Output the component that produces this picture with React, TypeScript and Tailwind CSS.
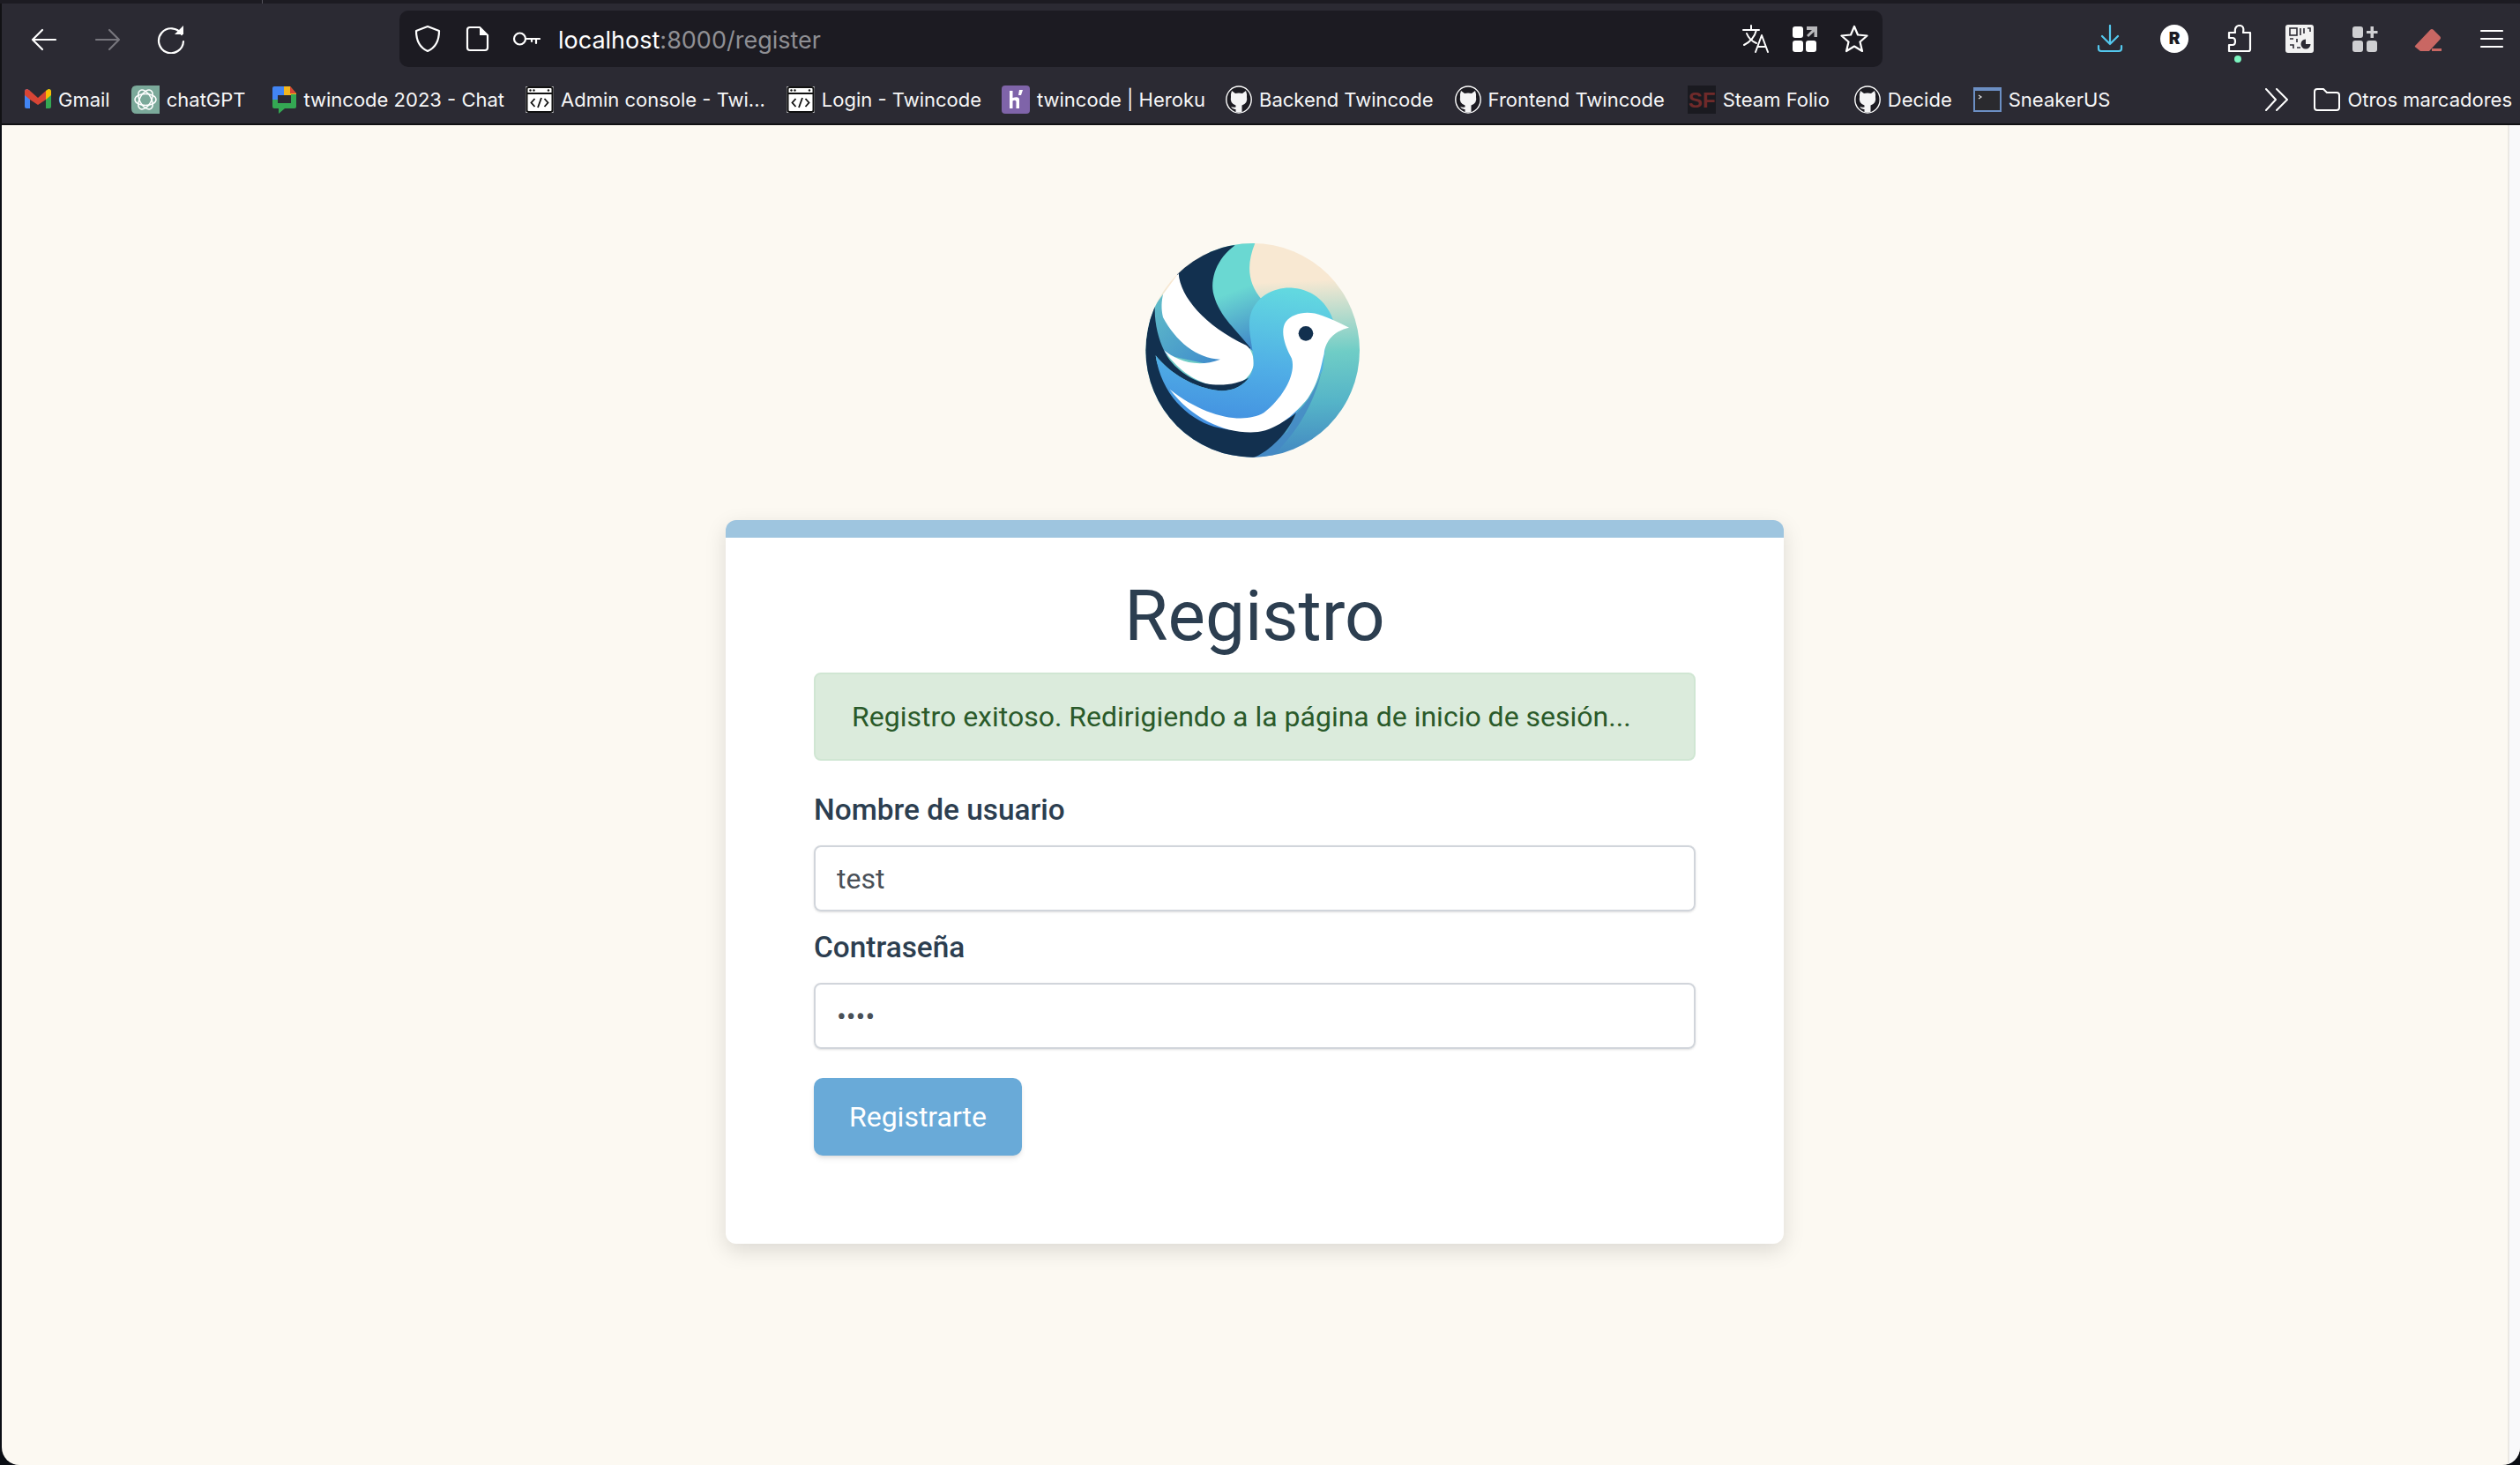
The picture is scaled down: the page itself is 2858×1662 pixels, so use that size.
import React from "react";

const Github = () => (
  <svg viewBox="0 0 30 32" className="w-[30px] h-[32px] shrink-0">
    <ellipse cx="15" cy="16" rx="14.2" ry="15" fill="#1c1b22" stroke="#ffffff" strokeWidth="1.4" />
    <path d="M7 6 L11 9 Q15 8 19 9 L23 6 Q24.5 10 24 13 Q25.5 20 18.5 22.5 L18.5 30 L11.5 30 L11.5 27 Q8 27.5 6 24 Q8.5 25 11.5 24.5 L11.5 22.5 Q4.5 20 6 13 Q5.5 10 7 6 Z" fill="#f4f4f5" />
  </svg>
);

const CodeWin = () => (
  <svg viewBox="0 0 32 32" className="w-8 h-8 shrink-0">
    <rect x="0.5" y="1" width="31" height="30" fill="#ffffff" />
    <rect x="1.5" y="2" width="29" height="28" rx="2" fill="#ffffff" stroke="#111" strokeWidth="2" />
    <path d="M1.5 9 H30.5" stroke="#111" strokeWidth="2" />
    <circle cx="5.5" cy="5.5" r="1.2" fill="#111" />
    <circle cx="9.5" cy="5.5" r="1.2" fill="#111" />
    <circle cx="26" cy="5.5" r="1.2" fill="#111" />
    <path d="M10.5 15 L6.5 19.5 L10.5 24 M21.5 15 L25.5 19.5 L21.5 24 M18 14 L14 25" fill="none" stroke="#111" strokeWidth="1.8" />
  </svg>
);

const Gmail = () => (
  <svg viewBox="0 0 30 24" className="w-[30px] h-[24px] shrink-0">
    <path d="M0 3 Q0 0 3 0 L6 2 V22 H2 Q0 22 0 20 Z" fill="#4285f4" />
    <path d="M30 3 Q30 0 27 0 L24 2 V22 H28 Q30 22 30 20 Z" fill="#34a853" />
    <path d="M24 2 L27 0 Q30 0 30 3 V7 L24 12 Z" fill="#fbbc04" />
    <path d="M0 3 Q0 0 3 0 L6 2 L15 10 L24 2 V12 L15 18 L6 12 L0 7 Z" fill="#d74535" />
  </svg>
);

const ChatGPT = () => (
  <svg viewBox="0 0 32 32" className="w-8 h-8 shrink-0">
    <path d="M6 0 H32 V32 H6 Q0 32 0 26 V6 Q0 0 6 0 Z" fill="#7ba99a" />
    <g fill="none" stroke="#ffffff" strokeWidth="1.5">
      <ellipse cx="16" cy="16" rx="12" ry="6.5" />
      <ellipse cx="16" cy="16" rx="12" ry="6.5" transform="rotate(60 16 16)" />
      <ellipse cx="16" cy="16" rx="12" ry="6.5" transform="rotate(120 16 16)" />
    </g>
  </svg>
);

const GChat = () => (
  <svg viewBox="0 0 28 32" className="w-[28px] h-8 shrink-0 ml-[6px]">
    <path d="M2 1 H13 V11 H6 V17 H0 V3 Q0 1 2 1Z" fill="#4285f4" />
    <path d="M13 1 H20 L27 9 V11 H13Z" fill="#f3b51d" />
    <path d="M20 1 L27 9 H20Z" fill="#d74535" />
    <path d="M21 10 H27 V24 Q27 26 25 26 H14 L7 32 V26 H2 Q0 26 0 24 V16 H6 V20 H21 Z" fill="#34a853" />
    <rect x="6" y="11" width="15" height="9" fill="#2b2a33" />
  </svg>
);

const Heroku = () => (
  <svg viewBox="0 0 32 32" className="w-8 h-8 shrink-0">
    <rect width="32" height="32" rx="4" fill="#7f64a9" />
    <path d="M9 6 H12.5 V14 Q20 12 20 16 V26 H16.5 V18 Q15 16 12.5 17.5 V26 H9 Z" fill="#ffffff" />
    <path d="M20 5 L24 5 L22 11 L19 11 Z" fill="#ffffff" />
  </svg>
);

const Steam = () => (
  <svg viewBox="0 0 32 32" className="w-8 h-8 shrink-0">
    <rect width="32" height="32" fill="#1a1a20" />
    <text x="16" y="25" textAnchor="middle" fontFamily="Liberation Sans, sans-serif" fontWeight="700" fontSize="24" fill="#6f2a2a">SF</text>
  </svg>
);

const Terminal = () => (
  <svg viewBox="0 0 32 28" className="w-8 h-7 shrink-0">
    <rect width="32" height="28" fill="#6c8fc4" />
    <rect x="2" y="4" width="28" height="22" fill="#2a2a2e" />
    <path d="M6 9 L9 11 L6 13" fill="none" stroke="#ddd" strokeWidth="1.2" />
  </svg>
);

const Mark = ({ icon, label, className = "" }: { icon: React.ReactNode; label: string; className?: string }) => (
  <div className={`flex items-center shrink-0 gap-[8px] ${className}`}>
    {icon}
    <span>{label}</span>
  </div>
);

const Bird = () => (
  <svg viewBox="0 0 900 810" className="w-[300px] h-[270px] shrink-0 -ml-[6px]">
    <defs>
      <clipPath id="disc"><circle cx="452" cy="412" r="364" /></clipPath>
      <linearGradient id="base" x1="0.6" y1="0.05" x2="0.65" y2="1">
        <stop offset="0.18" stopColor="#f8e8d2" />
        <stop offset="0.5" stopColor="#6fcdc6" />
        <stop offset="0.72" stopColor="#55b4c8" />
        <stop offset="1" stopColor="#3f7fc0" />
      </linearGradient>
      <linearGradient id="teal" x1="0.5" y1="0" x2="0.7" y2="1">
        <stop offset="0.45" stopColor="#6ad8d2" />
        <stop offset="1" stopColor="#3f84c8" />
      </linearGradient>
      <linearGradient id="wingb" x1="0" y1="0" x2="1" y2="1">
        <stop offset="0" stopColor="#63c1c8" />
        <stop offset="1" stopColor="#3d88cc" />
      </linearGradient>
      <linearGradient id="body" x1="0.6" y1="0" x2="0.45" y2="1">
        <stop offset="0" stopColor="#62d8e0" />
        <stop offset="0.55" stopColor="#50aee6" />
        <stop offset="1" stopColor="#428ee0" />
      </linearGradient>
    </defs>
    <g clipPath="url(#disc)">
      <rect width="900" height="810" fill="url(#base)" />
      <path d="M690 470 C670 540 640 590 598 628 L570 690 L405 790 L500 790 C600 700 660 600 690 470Z" fill="#4588c4" opacity="0.8" />
      <path d="M360 30 L468 30 C430 110 430 180 485 242 L460 420 L300 300 L280 100Z" fill="url(#teal)" />
      <path d="M392 55 C330 100 305 170 320 225 C340 300 400 345 445 405 L400 420 C300 360 230 280 200 190 L190 120 L300 60Z" fill="#12304f" />
      <path d="M147 222 L90 300 L120 420 L350 470 L345 440 C290 440 200 370 147 222Z" fill="url(#wingb)" />
      <path d="M200 150 C205 230 290 330 430 395 C450 410 458 440 455 465 C440 520 390 540 320 532 C250 520 190 470 150 412 C190 445 260 475 342 443 C260 440 190 380 147 300 C140 270 142 245 147 222Z" fill="#ffffff" />
      <path d="M120 250 C100 300 70 420 100 540 C180 720 330 790 420 790 C500 770 570 700 600 625 L470 620 C350 640 260 620 180 545 C140 500 125 460 122 430 C170 490 250 540 340 550 C390 552 420 530 440 505 C400 530 340 535 290 525 C230 510 170 460 150 412 C130 370 115 310 120 250Z" fill="#12304f" />
      <path d="M122 430 C170 490 250 540 340 550 C400 552 445 520 455 465 C460 420 430 340 445 290 C465 225 530 195 590 200 C660 205 710 255 728 315 L700 400 L690 480 L600 625 C540 680 420 700 320 672 C230 645 140 560 122 430Z" fill="url(#body)" />
      <path d="M780 335 C750 320 720 305 690 295 C640 275 590 285 565 315 C545 345 560 395 585 440 C600 490 560 570 490 625 C420 665 290 640 170 545 C250 650 370 700 470 690 C540 680 600 625 640 575 C680 515 685 460 695 425 C700 370 740 345 780 335Z" fill="#ffffff" />
      <circle cx="633" cy="355" r="25" fill="#12304f" />
    </g>
  </svg>
);

const I = ({ children, className = "" }: { children: React.ReactNode; className?: string }) => (
  <svg viewBox="0 0 32 32" className={`w-8 h-8 shrink-0 ${className}`} fill="none" stroke="currentColor" strokeWidth="2.2" strokeLinecap="round" strokeLinejoin="round">
    {children}
  </svg>
);

export default function App() {
  return (
    <div className="w-[2858px] h-[1662px] flex flex-col overflow-hidden font-['Inter','Liberation_Sans',sans-serif] bg-[#0b0e14]">
      <div className="h-1 bg-[#1c1b22] shrink-0 flex">
        <div className="w-[298px] border-r border-[#55545c]" />
      </div>
      <header className="shrink-0 bg-[#2b2a33] border-l-[2px] border-[#111114] text-white h-[136px] flex flex-col">
        <div className="h-[72px] pt-[8px] flex items-start">
          <div className="flex items-center h-[64px] w-full">
            <I className="ml-[32px] mt-[2px] text-white">
              <path d="M29 16 H3 M14 5 L3 16 L14 27" />
            </I>
            <I className="ml-[40px] mt-[2px] text-[#77767d]">
              <path d="M3 16 H29 M18 5 L29 16 L18 27" />
            </I>
            <I className="ml-[40px] mt-[2px] text-white">
              <path d="M28 10 A14 14 0 1 0 30 18" />
              <path d="M20 10 L30 10 L30 0 Z" fill="currentColor" stroke="none" />
            </I>
            <div className="ml-[243px] w-[1682px] h-[64px] rounded-[10px] bg-[#1c1b22] flex items-center pl-[16px] pr-[16px] shrink-0">
              <I>
                <path d="M16 2 L29 7 C29 18 25 26 16 30 C7 26 3 18 3 7 Z" />
              </I>
              <I className="ml-[24px]">
                <path d="M8 3 H19 L28 12 V26 Q28 29 25 29 H8 Q5 29 5 26 V6 Q5 3 8 3Z" />
                <path d="M19 3 L28 12 H19Z" fill="currentColor" stroke="none" />
              </I>
              <I className="ml-[24px]">
                <circle cx="8.5" cy="16" r="6.5" />
                <path d="M15 16 H31 M27 16 V21 M22 16 V19" />
              </I>
              <span className="ml-[20px] mt-[2px] text-[27px] leading-none">
                localhost<span className="text-[#8f8f94]">:8000/register</span>
              </span>
              <I className="ml-auto">
                <path d="M2 6 H20 M11 1 V6 M17 6 C15 14 9 20 3 23 M6 10 C8 15 12 19 17 21" strokeWidth="2" />
                <path d="M16 31 L23 12 L30 31 M18.5 25 H27.5" strokeWidth="2" />
              </I>
              <svg viewBox="0 0 32 32" className="w-8 h-8 shrink-0 ml-[24px]" fill="#ffffff">
                <rect x="2" y="2" width="12" height="13" rx="3" />
                <rect x="2" y="18" width="12" height="13" rx="3" />
                <rect x="17" y="18" width="12" height="13" rx="3" />
                <path d="M18 2 H30 V14 H26.5 V8 L20 14 L18 12 L24 6 H18 Z" fill="#b8b8bb" />
              </svg>
              <I className="ml-[24px]">
                <path d="M16 2 L20 11.5 L30.5 12.5 L22.5 19.5 L25 30 L16 24.5 L7 30 L9.5 19.5 L1.5 12.5 L12 11.5 Z" />
              </I>
            </div>
            <I className="ml-[242px] text-[#54c8ee]">
              <path d="M16 1 V22 M7 13 L16 22 L25 13" />
              <path d="M3 24 V27 Q3 30 6 30 H26 Q29 30 29 27 V24" />
            </I>
            <div className="ml-[41px] w-8 h-8 rounded-full bg-white text-[#1c1b22] flex items-center justify-center text-[19px] font-black shrink-0">R</div>
            <div className="ml-[41px] relative w-8 h-8 shrink-0">
              <I className="text-white">
                <path d="M5 30 V23 H9 C13 23 13 15 9 15 H5 V9 H12 C11 3 14 1 17 1 C21 1 22 4 21 9 H29 V28 Q29 30 27 30 Z" />
              </I>
              <span className="absolute left-[11px] top-[35px] w-2 h-2 rounded-full bg-[#7cf5c0]" />
            </div>
            <svg viewBox="0 0 32 32" className="ml-[37px] w-8 h-8 shrink-0">
              <rect width="32" height="32" rx="3" fill="#f2f2f2" />
              <g fill="none" stroke="#2b2a33" strokeWidth="1.6">
                <rect x="5" y="4" width="8" height="8" />
                <path d="M17 4 V12 M21 4 V10 M25 4 H28 V8" />
                <path d="M5 16 H9 M13 16 V20 M5 23 H9 V27 M13 26 H17" />
              </g>
              <circle cx="23" cy="22" r="5.5" fill="#2b2a33" />
              <path d="M23 22 L23 15 H30 V22Z" fill="#f2f2f2" />
            </svg>
            <svg viewBox="0 0 32 32" className="ml-[42px] w-8 h-8 shrink-0" fill="#cfcfd2">
              <rect x="2" y="2" width="12" height="13" rx="3" />
              <rect x="2" y="18" width="12" height="13" rx="3" />
              <rect x="18" y="18" width="12" height="13" rx="3" />
              <path d="M22.5 2 H26 V7 H30.5 V10 H26 V15 H22.5 V10 H18 V7 H22.5 Z" />
            </svg>
            <svg viewBox="0 0 32 32" className="ml-[40px] w-8 h-8 shrink-0" fill="#c96763">
              <path d="M1 24 L18 6 Q20 4 22 6 L29 13 Q31 15 29 17 L17 30 H7 L2 26 Q0 25 1 24Z" />
              <rect x="20" y="27" width="11" height="3" />
            </svg>
            <I className="ml-[40px]">
              <path d="M4 7 H28 M4 16 H28 M4 25 H28" />
            </I>
          </div>
        </div>
        <div className="h-[64px] pt-[10px] flex items-center text-[22px] text-[#f6f6f7] whitespace-nowrap pl-[26px] pr-[9px] gap-[24px]">
          <Mark icon={<Gmail />} label="Gmail" />
          <Mark icon={<ChatGPT />} label="chatGPT" />
          <Mark icon={<GChat />} label="twincode 2023 - Chat" />
          <Mark icon={<CodeWin />} label="Admin console - Twi..." />
          <Mark icon={<CodeWin />} label="Login - Twincode" />
          <Mark icon={<Heroku />} label="twincode | Heroku" className="-ml-[1px]" />
          <Mark icon={<Github />} label="Backend Twincode" className="-ml-[1px]" />
          <Mark icon={<Github />} label="Frontend Twincode" />
          <Mark icon={<Steam />} label="Steam Folio" className="ml-[2px]" />
          <Mark icon={<Github />} label="Decide" className="ml-[4px]" />
          <Mark icon={<Terminal />} label="SneakerUS" />
          <svg viewBox="0 0 26 26" className="ml-auto w-[26px] h-[26px] shrink-0" fill="none" stroke="#ffffff" strokeWidth="2" strokeLinecap="round" strokeLinejoin="round">
            <path d="M1 1 L12 13 L1 25 M13 1 L25 13 L13 25" />
          </svg>
          <div className="flex items-center gap-[8px] ml-[5px]">
            <svg viewBox="0 0 30 26" className="w-[30px] h-[26px] shrink-0" fill="none" stroke="#ffffff" strokeWidth="2" strokeLinejoin="round">
              <path d="M1 4 Q1 1 4 1 H11 L15 5 H26 Q29 5 29 8 V22 Q29 25 26 25 H4 Q1 25 1 22 Z" />
            </svg>
            <span>Otros marcadores</span>
          </div>
        </div>
      </header>
      <div className="h-[2px] bg-[#111114] shrink-0" />
      <main className="flex-1 flex ml-[2px] rounded-b-[20px] overflow-hidden bg-[#fcf9f2] font-['Roboto','Liberation_Sans',sans-serif]">
        <div className="flex-1 flex flex-col items-center pt-[118px]">
          <Bird />
          <section className="mt-[60px] w-[1200px] bg-white rounded-xl border-t-[20px] border-[#9ec5df] shadow-[0_8px_24px_rgba(0,0,0,0.13)] px-[100px] pt-[41px] pb-[100px]">
            <h1 className="text-[80px] leading-[96px] text-center text-[#2c3e50] mb-[16px]">Registro</h1>
            <div className="h-[100px] flex items-center rounded-lg bg-[#dbebdc] border-2 border-[#d0e6d3] pl-[41px] text-[32px] text-[#2a5a2a]">
              Registro exitoso. Redirigiendo a la página de inicio de sesión...
            </div>
            <label className="block mt-[37px] text-[33.4px] leading-[38px] font-medium text-[#2c3e50]">Nombre de usuario</label>
            <input readOnly defaultValue="test" className="block mt-[21px] w-full h-[75px] rounded-lg border-2 border-[#d1d5db] shadow-sm pl-[24px] text-[32px] text-[#495057] outline-none" />
            <label className="block mt-[22px] text-[33.4px] leading-[38px] font-medium text-[#2c3e50]">Contraseña</label>
            <input readOnly type="password" defaultValue="test" className="block mt-[21px] w-full h-[75px] rounded-lg border-2 border-[#d1d5db] shadow-sm pl-[24px] text-[32px] text-[#495057] outline-none" />
            <button className="block mt-[33px] w-[236px] h-[88px] rounded-[10px] bg-[#69aad8] text-white text-[32px] shadow-md">Registrarte</button>
          </section>
        </div>
        <div className="w-[14px] border-l-2 border-[#ebe9e4] bg-[#f9f9fa] shrink-0" />
      </main>
    </div>
  );
}
